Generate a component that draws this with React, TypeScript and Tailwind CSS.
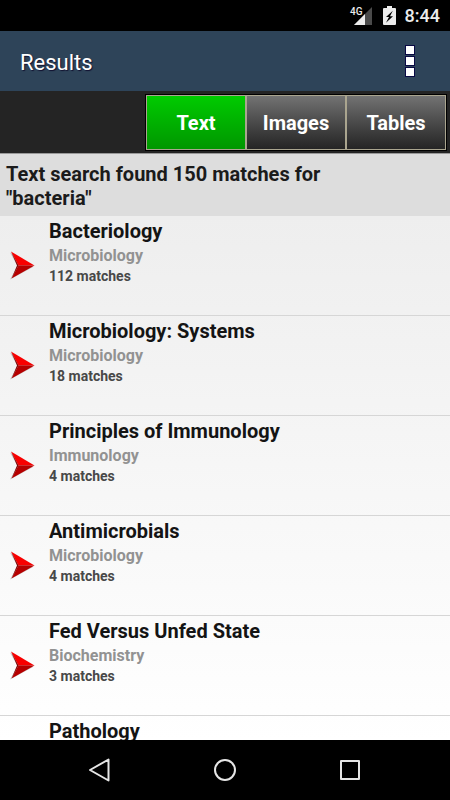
type Result = { title: string; subject?: string; matches?: number };

const results: Result[] = [
  { title: "Bacteriology", subject: "Microbiology", matches: 112 },
  { title: "Microbiology: Systems", subject: "Microbiology", matches: 18 },
  { title: "Principles of Immunology", subject: "Immunology", matches: 4 },
  { title: "Antimicrobials", subject: "Microbiology", matches: 4 },
  { title: "Fed Versus Unfed State", subject: "Biochemistry", matches: 3 },
  { title: "Pathology" },
];

function StatusBar() {
  return (
    <div className="flex h-[31px] shrink-0 items-center justify-end bg-black pt-px pr-[10px] text-[#ececec]">
      <svg width="24" height="20" viewBox="0 0 24 20" className="mr-[10px]" aria-label="4G signal">
        <path d="M23 1v18H5z" fill="#4a4a4a" />
        <path d="M16 8.1V19H5z" fill="#ececec" />
        <path d="M0 0h14v10H0z" fill="#000" />
        <text x="1" y="9" fill="#ececec" fontSize="10" fontWeight="500" fontFamily="Roboto, sans-serif">
          4G
        </text>
      </svg>
      <svg width="13" height="20" viewBox="0 0 13 20" className="mr-[9px]" aria-label="Battery charging">
        <path d="M4 0h5v2h3q1 0 1 1v15q0 1-1 1H1q-1 0-1-1V3q0-1 1-1h3z" fill="#ececec" />
        <path d="M9.8 4.8 3 11h3l-3 5.8 7-6.6H7z" fill="#000" />
      </svg>
      <span className="text-lg leading-none font-medium">8:44</span>
    </div>
  );
}

function ResultArrow() {
  return (
    <svg width="26" height="30" viewBox="0 0 26 30" className="shrink-0" aria-hidden="true">
      <path d="M0 1.5 7.5 15 0 28.5 23 16z" fill="#999" opacity="0.5" />
      <path d="M1 .5 24.5 14.5H8.5z" fill="#f80000" />
      <path d="M8.5 14.5h16L1.5 27.5z" fill="#b60000" />
      <path d="M1 .5 8.5 14.5 1.5 27.5 7 14.5z" fill="#850000" />
    </svg>
  );
}

export default function App() {
  return (
    <div className="flex h-screen flex-col overflow-hidden bg-white font-[Roboto,sans-serif]">
      <StatusBar />

      <header className="flex h-[60px] shrink-0 items-center justify-between bg-[#2e4459] pt-[2px] pr-[35px] pl-5">
        <h1 className="text-[22px] text-white [text-shadow:1px_1px_1px_#111130]">Results</h1>
        <button type="button" aria-label="More options">
          <svg width="10" height="34" viewBox="0 0 10 34">
            <path d="M0 0h10v10H0zM0 11h10v10H0zM0 22h10v10H0z" fill="#090944" />
            <path d="M1 1h8v8H1zM1 12h8v8H1zM1 23h8v8H1z" fill="#fff" />
          </svg>
        </button>
      </header>

      <nav className="flex h-[62px] shrink-0 items-center justify-end bg-[#242424] pt-px pr-[3px] text-xl font-bold text-white [text-shadow:1px_1px_2px_#000]">
        <div className="flex border border-black">
          <button
            type="button"
            className="h-[55px] w-[100px] border border-[#aaa58f] bg-linear-to-b from-[#00cb00] to-[#009700]"
          >
            Text
          </button>
          <button
            type="button"
            className="h-[55px] w-[100px] border border-[#aaa58f] bg-linear-to-b from-[#737373] to-[#252525]"
          >
            Images
          </button>
          <button
            type="button"
            className="h-[55px] w-[100px] border border-[#aaa58f] bg-linear-to-b from-[#737373] to-[#252525]"
          >
            Tables
          </button>
        </div>
      </nav>

      <p className="h-[63px] shrink-0 border-t border-[#999] bg-[#dddddd] pt-2 pr-20 pl-[6px] text-xl leading-6 font-bold text-[#1b1b1b]">
        Text search found 150 matches for "bacteria"
      </p>

      <main className="min-h-0 flex-1 overflow-hidden bg-linear-to-b from-[#eeeeee] to-white">
        <ul>
          {results.map((result) => (
            <li key={result.title} className="h-[100px] border-b border-[#d6d6d6]">
              <a href="#" className="flex h-full items-center gap-[13px] pl-[10px]">
                <ResultArrow />
                <div className="self-start pt-[2px] font-bold">
                  <h2 className="text-xl leading-[26px] text-[#141414]">{result.title}</h2>
                  {result.subject && (
                    <p className="text-base leading-6 text-[#929292]">{result.subject}</p>
                  )}
                  {result.matches && (
                    <p className="text-sm leading-4 text-[#484848]">{result.matches} matches</p>
                  )}
                </div>
              </a>
            </li>
          ))}
        </ul>
      </main>

      <footer className="flex h-[60px] shrink-0 items-center justify-center gap-[101px] bg-black">
        <button type="button" aria-label="Back">
          <svg width="24" height="24" viewBox="0 0 24 24" fill="none" stroke="#e6e6e6" strokeWidth="2" strokeLinejoin="round">
            <path d="M20.5 1.5v21L2 12z" />
          </svg>
        </button>
        <button type="button" aria-label="Home">
          <svg width="24" height="24" viewBox="0 0 24 24" fill="none" stroke="#e6e6e6" strokeWidth="2">
            <circle cx="12" cy="12" r="10" />
          </svg>
        </button>
        <button type="button" aria-label="Recent apps">
          <svg width="24" height="24" viewBox="0 0 24 24" fill="none" stroke="#e6e6e6" strokeWidth="2" strokeLinejoin="round">
            <path d="M3 3h18v18H3z" />
          </svg>
        </button>
      </footer>
    </div>
  );
}
